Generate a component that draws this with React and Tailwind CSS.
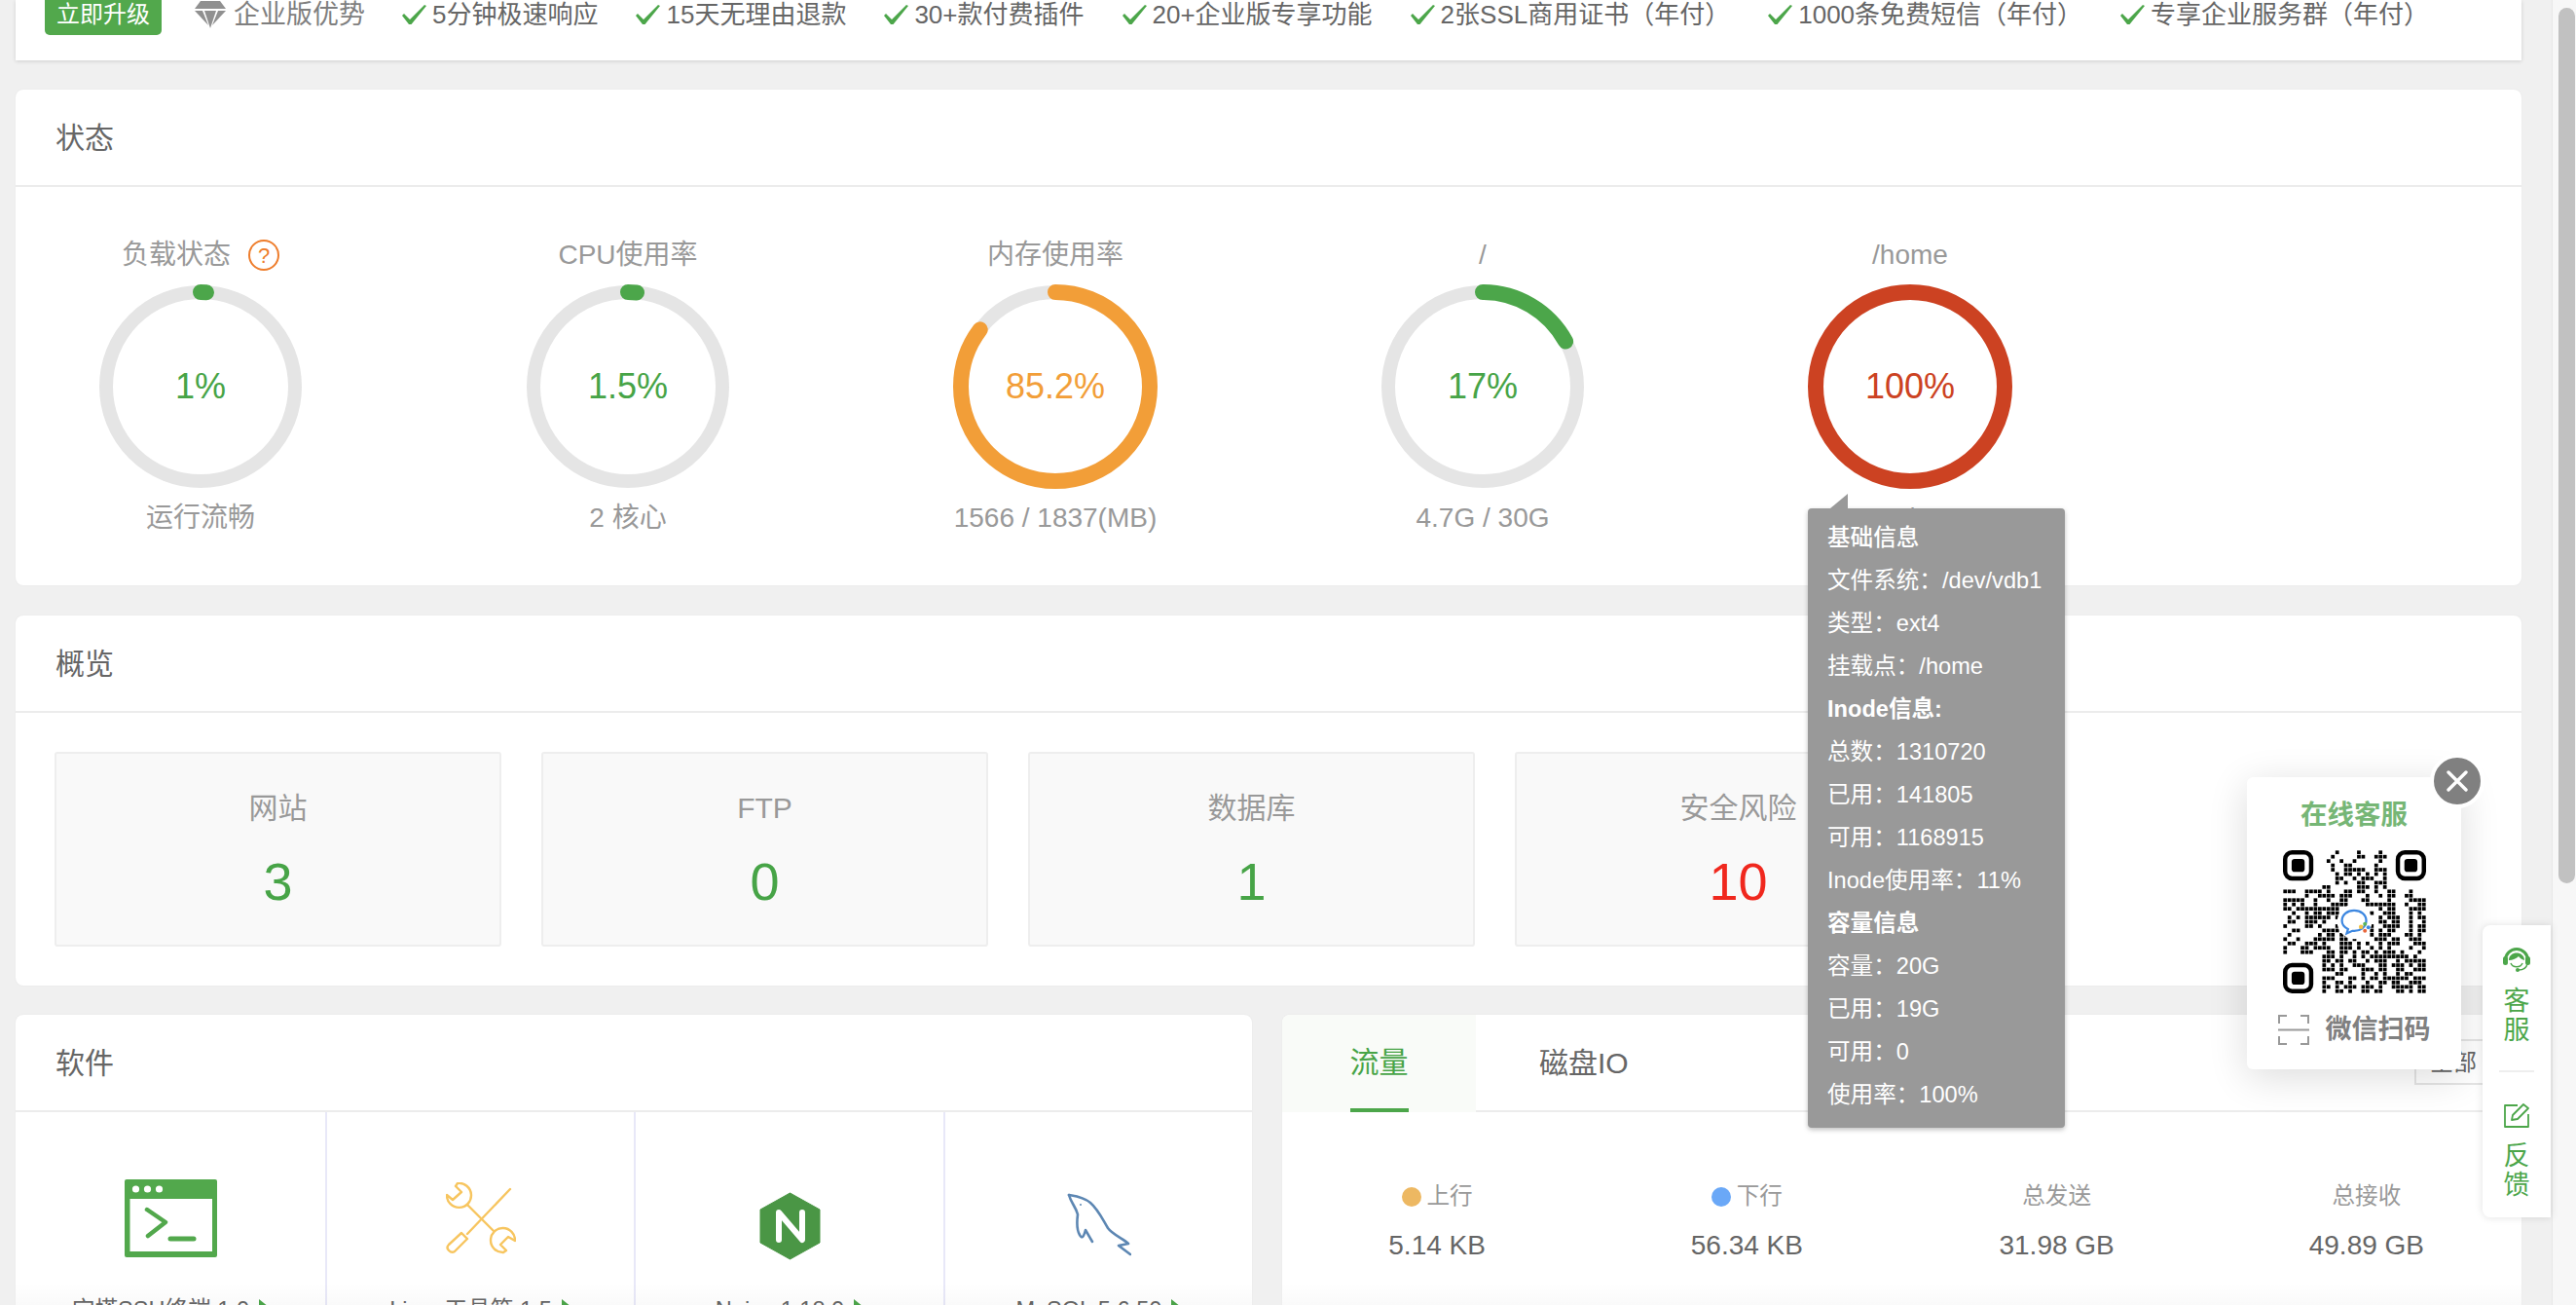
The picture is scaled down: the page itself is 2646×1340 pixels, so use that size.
import { Fragment } from 'react'

const perks = ['5分钟极速响应', '15天无理由退款', '30+款付费插件', '20+企业版专享功能', '2张SSL商用证书（年付）', '1000条免费短信（年付）', '专享企业服务群（年付）']

const rings = [
  { title: '负载状态', pct: 1, text: '1%', sub: '运行流畅', color: '#4ca64a', txt: 'text-[#47a447]', help: true },
  { title: 'CPU使用率', pct: 1.5, text: '1.5%', sub: '2 核心', color: '#4ca64a', txt: 'text-[#47a447]' },
  { title: '内存使用率', pct: 85.2, text: '85.2%', sub: '1566 / 1837(MB)', color: '#f29e38', txt: 'text-[#f29e38]' },
  { title: '/', pct: 17, text: '17%', sub: '4.7G / 30G', color: '#4ca64a', txt: 'text-[#47a447]' },
  { title: '/home', pct: 100, text: '100%', sub: '19G / 20G', color: '#cc4222', txt: 'text-[#cc4222]' },
]

const cards = [
  { name: '网站', num: 3, color: 'text-[#47a447]' },
  { name: 'FTP', num: 0, color: 'text-[#47a447]' },
  { name: '数据库', num: 1, color: 'text-[#47a447]' },
  { name: '安全风险', num: 10, color: 'text-[#f0281e]' },
]

const tips = [
  ['基础信息', 'font-medium'],
  ['文件系统：/dev/vdb1'],
  ['类型：ext4'],
  ['挂载点：/home'],
  ['Inode信息:', 'font-bold'],
  ['总数：1310720'],
  ['已用：141805'],
  ['可用：1168915'],
  ['Inode使用率：11%'],
  ['容量信息', 'font-bold'],
  ['容量：20G'],
  ['已用：19G'],
  ['可用：0'],
  ['使用率：100%'],
]

const stats = [
  { label: '上行', value: '5.14 KB', dot: 'bg-[#edb862]' },
  { label: '下行', value: '56.34 KB', dot: 'bg-[#6aa8f7]' },
  { label: '总发送', value: '31.98 GB' },
  { label: '总接收', value: '49.89 GB' },
]

// qr modules, one list of columns per row (finder corners drawn apart)
const qr = [
  [12, 17, 22], [11, 17, 18, 21, 22, 23], [10, 13, 16, 22], [11, 14, 15, 21], [11, 14, 15, 16, 17, 18, 21, 22, 23],
  [12, 14, 15, 17, 19, 21, 23], [12, 13, 16, 18, 19, 20, 23], [12, 14, 17, 18, 21, 22, 23], [9, 10, 17, 18, 19, 21, 23],
  [0, 1, 2, 5, 6, 7, 8, 10, 14, 15, 17, 18, 21, 24, 25, 29], [5, 8, 9, 10, 11, 13, 14, 15, 19, 22, 24, 25, 28, 29],
  [0, 1, 2, 3, 4, 7, 10, 13, 14, 18, 19, 24, 29, 30, 31, 32], [0, 2, 4, 7, 11, 12, 13, 14, 19, 20, 21, 22, 23, 24, 25, 28, 31, 32],
  [0, 1, 3, 4, 5, 6, 7, 8, 9, 10, 11, 12, 22, 24, 25, 29, 30, 31, 32], [2, 5, 7, 8, 10, 11, 12, 20, 23, 24, 25, 29, 31],
  [1, 3, 5, 6, 7, 8, 9, 10, 12, 13, 22, 24, 25, 26, 29, 31, 32], [1, 2, 5, 6, 7, 9, 22, 23, 25, 26, 29, 32],
  [0, 5, 6, 8, 12, 20, 23, 24, 25, 26, 29, 31, 32], [2, 3, 9, 10, 11, 12, 20, 22, 24, 25, 29, 31, 32],
  [1, 8, 10, 11, 13, 14, 20, 22, 23, 24, 28, 29, 31], [0, 3, 7, 8, 9, 10, 11, 13, 14, 16, 21, 22, 23, 25, 26, 29, 30, 31],
  [1, 2, 5, 6, 7, 9, 13, 14, 15, 17, 19, 22, 24, 25, 26, 30, 31, 32], [0, 4, 5, 7, 8, 9, 10, 13, 14, 15, 17, 20, 22, 24, 29, 32],
  [0, 4, 5, 6, 10, 11, 13, 14, 16, 18, 19, 21, 23, 24, 25, 27, 31], [9, 10, 11, 13, 16, 18, 20, 21, 22, 23, 24, 25, 26, 27, 28, 30],
  [9, 10, 12, 13, 15, 16, 19, 21, 22, 23, 26, 28, 29, 30, 31, 32], [9, 11, 13, 16, 17, 18, 22, 23, 25, 26, 27, 29, 31, 32],
  [9, 10, 11, 13, 14, 18, 19, 20, 22, 23, 26, 27, 30, 31, 32], [12, 13, 18, 21, 23, 26, 28, 29],
  [9, 10, 11, 15, 16, 18, 20, 21, 23, 24, 25, 26, 27, 28, 30, 31, 32], [9, 12, 13, 15, 19, 22, 23, 25, 26, 29, 30, 31],
  [9, 10, 12, 14, 15, 16, 18, 19, 20, 22, 25, 26, 27, 28, 29, 31, 32], [9, 12, 13, 15, 18, 19, 21, 22, 26, 27, 29, 31, 32],
]

function Ring({ pct, color }) {
  const c = 2 * Math.PI * 97
  return (
    <svg width="210" height="210" viewBox="0 0 210 210" fill="none">
      <circle cx="105" cy="105" r="97" stroke="#e5e5e5" strokeWidth="14" />
      <circle cx="105" cy="105" r="97" stroke={color} strokeWidth="16" strokeLinecap="round" strokeDasharray={`${(c * pct) / 100} ${c}`} transform="rotate(-90 105 105)" />
    </svg>
  )
}

function Tick() {
  return (
    <svg width="26" height="21" viewBox="0 0 26 21" fill="#4ca64a" className="shrink-0">
      <polygon points="0,11 2,9 8,15 23,0 25,1 9.5,20 7,20" />
    </svg>
  )
}

function Diamond() {
  return (
    <svg width="34" height="30" viewBox="0 0 34 30" fill="#909090">
      <polygon points="7,1 27,1 33,9 1,9" />
      <polygon points="1,11 9,11 15,26 " />
      <polygon points="11,11 23,11 17,29" />
      <polygon points="25,11 33,11 19,26" />
    </svg>
  )
}

function Terminal() {
  return (
    <svg width="95" height="80" viewBox="0 0 95 80" fill="none">
      <rect width="95" height="80" rx="2" fill="#52a84c" />
      <rect x="5.5" y="20" width="84.5" height="54" fill="#fff" />
      <circle cx="11.5" cy="10" r="3.6" fill="#fff" />
      <circle cx="23.5" cy="10" r="3.6" fill="#fff" />
      <circle cx="35.5" cy="10" r="3.6" fill="#fff" />
      <path d="M23 31 L42 44 L24 58" stroke="#52a84c" strokeWidth="4.5" strokeLinecap="round" strokeLinejoin="round" />
      <path d="M47 61 H71" stroke="#52a84c" strokeWidth="5" strokeLinecap="round" />
    </svg>
  )
}

function Tools() {
  return (
    <svg width="72" height="74" viewBox="0 0 72 74" fill="none" stroke="#f7c55f" strokeWidth="2.4" strokeLinejoin="round" strokeLinecap="round">
      <path d="M22 23 L49 50" />
      <path d="M66 7 L22 53" />
      <path d="M16 52 L22 58 L9 71 Q6 73 3 70 Q0 67 3 64 Z" />
      <path d="M12 1 A12.5 12.5 0 1 1 1 13 L7 18 L16 10 L10 4 Z" />
      <path d="M59 72 A12.5 12.5 0 1 1 71 60 L64 56 L56 64 L62 70 Z" />
    </svg>
  )
}

function Nginx() {
  return (
    <svg width="63" height="70" viewBox="0 0 63 70" fill="none">
      <polygon points="31.5,1 62,18 62,52 31.5,69 1,52 1,18" fill="#4a9645" stroke="#4a9645" strokeLinejoin="round" />
      <path d="M20 49 V21 L44 49 V21" stroke="#fff" strokeWidth="6" strokeLinecap="round" strokeLinejoin="round" />
    </svg>
  )
}

function Dolphin() {
  return (
    <svg width="66" height="66" viewBox="0 0 66 66" fill="none" stroke="#5d87b3" strokeWidth="2.6" strokeLinecap="round" strokeLinejoin="round">
      <path d="M2 2 C8 3 17 4 24 10 C32 17 36 26 42 36 C47 43 57 46 63 52 L53 54 L65 63" />
      <path d="M2 2 C4 10 9 14 11 22 C10 30 10 38 13 43 C15 47 17 46 19 38 L26 50" />
      <circle cx="14" cy="12" r="1" fill="#5d87b3" stroke="none" />
    </svg>
  )
}

function Finder({ x, y }) {
  return (
    <Fragment>
      <rect x={x + 0.5} y={y + 0.5} width="6" height="6" rx="1.6" fill="none" stroke="#000" strokeWidth="1" />
      <rect x={x + 2} y={y + 2} width="3" height="3" rx="0.7" fill="#000" />
    </Fragment>
  )
}

function Qr() {
  return (
    <svg width="147" height="147" viewBox="0 0 33 33">
      {qr.map((row, y) => row.map((x) => <rect key={`${x}-${y}`} x={x + 0.08} y={y + 0.08} width="0.84" height="0.84" fill="#000" />))}
      <Finder x={0} y={0} />
      <Finder x={26} y={0} />
      <Finder x={0} y={26} />
      <circle cx="16.5" cy="16.5" r="4" fill="#fff" />
      <path d="M15 18.2 L14.7 19.2 L16 18.6 C17.8 18.8 19.2 17.7 19.2 16.3 C19.2 14.9 18 13.9 16.4 13.9 C14.8 13.9 13.6 14.9 13.6 16.3 C13.6 17.1 14.2 17.8 15 18.2 Z" fill="none" stroke="#3d87e0" strokeWidth="0.5" />
      <circle cx="18" cy="17.7" r="0.5" fill="#f5c242" />
      <circle cx="18.9" cy="17" r="0.45" fill="#5bb55a" />
      <circle cx="19.7" cy="17.8" r="0.45" fill="#3d87e0" />
      <circle cx="18.9" cy="18.6" r="0.45" fill="#e8673c" />
    </svg>
  )
}

function Headset() {
  return (
    <svg width="28" height="26" viewBox="0 0 28 26" fill="none">
      <path d="M2.5 13 A11.5 11.5 0 0 1 25.5 13" stroke="#4ca64a" strokeWidth="3" />
      <rect x="0" y="9" width="5" height="9" rx="2.5" fill="#4ca64a" />
      <rect x="23" y="9" width="5" height="9" rx="2.5" fill="#4ca64a" />
      <path d="M6 13 C6 8 10 5.5 14 5.5 C18 5.5 22 8 22 13 C19 12 17 10.5 16 9 C14 11 10 13 6 13 Z" fill="#4ca64a" />
      <path d="M8 16 C10 21 18 21 20 16" stroke="#4ca64a" strokeWidth="1.5" />
      <path d="M25 17 C24 21 20 23 16 23" stroke="#4ca64a" strokeWidth="1.4" />
      <circle cx="15" cy="23" r="2" fill="#4ca64a" />
    </svg>
  )
}

function Pen() {
  return (
    <svg width="26" height="25" viewBox="0 0 26 25" fill="none" stroke="#4ca64a" strokeWidth="1.8" strokeLinejoin="round">
      <path d="M14 2 H1 V24 H25 V11" />
      <path d="M8 17 L9 12 L20 1 L25 5 L14 16 Z" />
    </svg>
  )
}

function ScanIcon() {
  return (
    <svg width="32" height="31" viewBox="0 0 32 31" fill="none" stroke="#999999" strokeWidth="2">
      <path d="M1 9 V1 H9 M23 1 H31 V9 M1 22 V30 H9 M23 30 H31 V22" />
      <path d="M0 15.5 H32" />
    </svg>
  )
}

function Panel({ title, className, children }) {
  return (
    <div className={`rounded-[8px] bg-white shadow-[0_0_2px_rgba(0,0,0,0.06)] ${className}`}>
      <div className="flex h-[100px] items-center border-b-2 border-[#ececec] pl-[41px] text-[30px] text-[#666666]">{title}</div>
      {children}
    </div>
  )
}

export default function App() {
  const soft = [
    { icon: <Terminal />, name: '宝塔SSH终端 1.0', top: 'mt-0' },
    { icon: <Tools />, name: 'Linux工具箱 1.5', top: 'mt-[3px]' },
    { icon: <Nginx />, name: 'Nginx 1.18.0', top: 'mt-[13px]' },
    { icon: <Dolphin />, name: 'MySQL 5.6.50', top: 'mt-[14px]' },
  ]

  return (
    <div className="relative flex h-[1340px] w-[2646px] overflow-hidden bg-[#f0f0f0] font-['Liberation_Sans','Noto_Sans_CJK_SC',sans-serif]">
      <div className="flex w-[2621px] flex-col pl-[16px] pr-[31px]">
        {/* top upgrade bar */}
        <div className="mb-[30px] flex h-[62px] shrink-0 items-start bg-white pl-[30px] shadow-[0_1px_4px_rgba(0,0,0,0.14)]">
          <div className="-mt-[6px] flex h-[42px] w-[120px] items-center justify-center rounded-[5px] bg-[#52a84c] text-[24px] text-white">立即升级</div>
          <div className="ml-[33px] flex h-[30px] items-center gap-[7px] text-[27px] text-[#7f7f7f]">
            <Diamond />
            <span>企业版优势</span>
          </div>
          <div className="ml-[38px] flex gap-[39px]">
            {perks.map((p) => (
              <div key={p} className="flex h-[30px] items-center gap-[5px] whitespace-nowrap text-[26px] text-[#666666]">
                <Tick />
                <span>{p}</span>
              </div>
            ))}
          </div>
        </div>

        {/* status */}
        <Panel title="状态" className="mb-[31px] h-[509px] shrink-0">
          <div className="flex gap-[59px]">
            {rings.map((r) => (
              <div key={r.title} className="flex w-[380px] flex-col items-center pt-[53px]">
                <div className="flex h-[34px] items-center gap-[18px] text-[28px] text-[#999999]">
                  <span>{r.title}</span>
                  {r.help && <span className="flex h-[32px] w-[32px] items-center justify-center rounded-full border-2 border-[#ee7d2c] text-[22px] text-[#ee7d2c]">?</span>}
                </div>
                <div className="relative mt-[13px] h-[210px] w-[210px]">
                  <Ring pct={r.pct} color={r.color} />
                  <div className={`absolute inset-0 flex items-center justify-center text-[36px] ${r.txt}`}>{r.text}</div>
                </div>
                <div className="mt-[13px] flex h-[34px] items-center text-[28px] text-[#999999]">{r.sub}</div>
              </div>
            ))}
          </div>
        </Panel>

        {/* overview */}
        <Panel title="概览" className="mb-[30px] h-[380px] shrink-0">
          <div className="flex gap-[41px] pl-[40px] pt-[40px]">
            {cards.map((c) => (
              <div key={c.name} className="flex h-[200px] w-[459px] flex-col items-center rounded-[3px] border-2 border-[#eeeeee] bg-[#f9f9f9] pt-[35px]">
                <div className="flex h-[40px] items-center text-[30px] text-[#999999]">{c.name}</div>
                <div className={`mt-[26px] flex h-[60px] items-center text-[54px] ${c.color}`}>{c.num}</div>
              </div>
            ))}
          </div>
        </Panel>

        <div className="flex flex-1 gap-[31px]">
          {/* software */}
          <Panel title="软件" className="relative h-[320px] w-[1270px] overflow-hidden rounded-b-none">
            <div className="grid grid-cols-[320px_317px_318px_1fr]">
              {soft.map((s, i) => (
                <div key={s.name} className={`flex h-[220px] flex-col items-center pt-[69px] ${i < 3 ? 'border-r-2 border-[#e8e8f8]' : ''}`}>
                  <div className="flex h-[122px] items-start">
                    <div className={s.top}>{s.icon}</div>
                  </div>
                  <div className="flex items-start gap-[10px] whitespace-nowrap text-[23.6px] leading-[34px] text-[#666666]">
                    <span>{s.name}</span>
                    <span className="mt-[6px] h-0 w-0 border-y-[8px] border-l-[10px] border-y-transparent border-l-[#4ca64a]"></span>
                  </div>
                </div>
              ))}
            </div>
            <div className="pointer-events-none absolute bottom-0 left-0 h-[45px] w-full bg-linear-to-b from-black/0 to-black/[0.04]"></div>
          </Panel>

          {/* network */}
          <div className="relative h-[320px] w-[1273px] overflow-hidden rounded-t-[8px] bg-white shadow-[0_0_2px_rgba(0,0,0,0.06)]">
            <div className="flex h-[100px] border-b-2 border-[#ececec]">
              <div className="-mb-[2px] flex w-[199px] justify-center bg-[#f9fbf8]">
                <div className="flex h-full w-[60px] items-center justify-center border-b-4 border-[#4ca64a] text-[30px] text-[#47a447]">流量</div>
              </div>
              <div className="flex items-center pl-[65px] text-[30px] text-[#666666]">磁盘IO</div>
              <div className="ml-auto mr-[30px] mt-[25px] flex h-[47px] w-[80px] items-center justify-center border-2 border-[#e5e5e5] text-[24px] text-[#666666]">全部</div>
            </div>
            <div className="grid grid-cols-4 pt-[70px]">
              {stats.map((s) => (
                <div key={s.label} className="flex flex-col items-center">
                  <div className="flex h-[34px] items-center gap-[6px] text-[23.6px] text-[#999999]">
                    {s.dot && <span className={`h-[20px] w-[20px] rounded-full ${s.dot}`}></span>}
                    <span>{s.label}</span>
                  </div>
                  <div className="mt-[16px] flex h-[34px] items-center text-[28px] text-[#666666]">{s.value}</div>
                </div>
              ))}
            </div>
            <div className="pointer-events-none absolute bottom-0 left-0 h-[45px] w-full bg-linear-to-b from-black/0 to-black/[0.04]"></div>
          </div>
        </div>
      </div>

      {/* scrollbar */}
      <div className="w-[25px] border-l border-[#e8e8e8] bg-[#f7f7f7] pl-[6px] pt-[8px]">
        <div className="h-[899px] w-[17px] rounded-full bg-[#c1c1c1]"></div>
      </div>

      {/* disk tooltip */}
      <div className="absolute left-[1857px] top-[522px] h-[636px] w-[264px] rounded-[4px] bg-[#999999] pl-[20px] pt-[9px] text-[23.6px] text-white shadow-[0_2px_5px_rgba(0,0,0,0.25)]">
        <div className="absolute -top-[15px] left-[23px] h-0 w-0 border-b-[15px] border-l-[18px] border-b-[#999999] border-l-transparent"></div>
        {tips.map(([line, weight]) => (
          <div key={line} className={`flex h-[44px] items-center whitespace-nowrap ${weight || ''}`}>{line}</div>
        ))}
      </div>

      {/* qr popup */}
      <div className="absolute left-[2308px] top-[798px] flex h-[300px] w-[220px] flex-col items-center rounded-[6px] bg-white pt-[21px] shadow-[0_8px_40px_rgba(0,0,0,0.14)]">
        <div className="flex h-[36px] items-center text-[27.5px] font-bold text-[#76b676]">在线客服</div>
        <div className="mt-[18px] h-[147px]">
          <Qr />
        </div>
        <div className="mt-[20px] flex h-[34px] items-center gap-[17px] text-[27px] font-bold text-[#808080]">
          <ScanIcon />
          <span>微信扫码</span>
        </div>
        <div className="absolute -right-[24px] -top-[24px] flex h-[56px] w-[56px] items-center justify-center rounded-full border-4 border-white bg-[#808080]">
          <svg width="22" height="22" viewBox="0 0 22 22" stroke="#fff" strokeWidth="3.4" strokeLinecap="round">
            <path d="M2 2 L20 20 M20 2 L2 20" />
          </svg>
        </div>
      </div>

      {/* side tab */}
      <div className="absolute left-[2550px] top-[950px] flex h-[300px] w-[70px] flex-col items-center rounded-l-[8px] bg-white pt-[23px] text-[27px] leading-[30px] text-[#4ca64a] shadow-[0_0_8px_rgba(0,0,0,0.12)]">
        <Headset />
        <div className="mt-[14px] w-[27px] text-center">客服</div>
        <div className="mt-[26px] h-[2px] w-[36px] bg-[#eeeeee]"></div>
        <div className="mt-[32px]">
          <Pen />
        </div>
        <div className="mt-[14px] w-[27px] text-center">反馈</div>
      </div>
    </div>
  )
}
